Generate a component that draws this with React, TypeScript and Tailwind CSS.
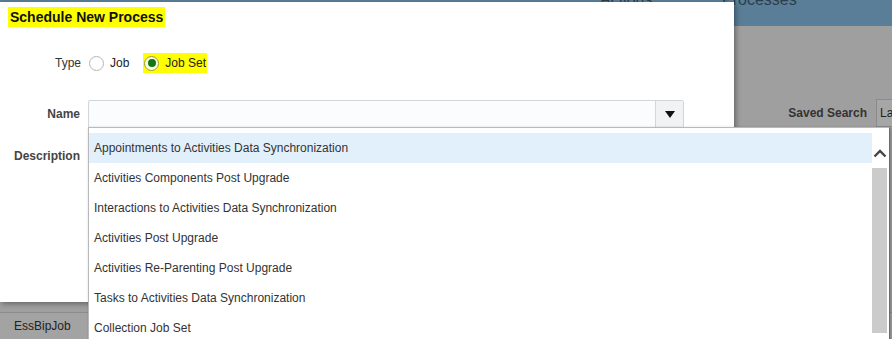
import React from 'react';

const items = [
  'Appointments to Activities Data Synchronization',
  'Activities Components Post Upgrade',
  'Interactions to Activities Data Synchronization',
  'Activities Post Upgrade',
  'Activities Re-Parenting Post Upgrade',
  'Tasks to Activities Data Synchronization',
  'Collection Job Set',
];

const App: React.FC = () => {
  return (
    <div className="relative w-[892px] h-[339px] overflow-hidden bg-[#9f9f9f] font-['Liberation_Sans',Arial,sans-serif]">
      {/* Page behind the modal */}
      <div className="flex flex-col h-full">
        <div className="h-[26px] bg-[#5a7e98] relative overflow-hidden">
          <span className="absolute left-[600px] -top-[12px] text-[16px] text-[#2c3e4c]">Actions</span>
          <span className="absolute left-[722px] -top-[12px] text-[16px] text-[#2c3e4c]">Processes</span>
        </div>
        <div className="flex justify-end items-center pt-[73px] gap-[9px]">
          <span className="text-[12px] font-bold text-[#333]">Saved Search</span>
          <div className="w-[16px] h-[28px] border border-[#8a8a8a] border-r-0 bg-[#a6a6a6] pl-[3px] text-[12px] leading-[26px] text-[#222] overflow-hidden">La</div>
        </div>
        <div className="mt-auto h-[27px] bg-[#a3a3a3] border-t border-[#8d8d8d] flex items-center">
          <span className="pl-[14px] text-[12px] text-[#222]">EssBipJob</span>
        </div>
      </div>

      {/* Dialog */}
      <div className="absolute left-0 top-[2px] w-[734px] h-[300px] bg-white shadow-[2px_2px_5px_rgba(0,0,0,0.35)]">
        <div className="pt-[3px] pl-[8px]">
          <span className="bg-[#ffff00] px-[2px] py-[2px] text-[14px] font-bold text-[#111]">Schedule New Process</span>
        </div>
        <div className="flex items-center mt-[24px] h-[20px]">
          <span className="w-[81px] text-right text-[12px] text-[#333]">Type</span>
          <span className="ml-[8px] w-[15px] h-[15px] rounded-full border border-[#b5b5b5] bg-white" />
          <span className="ml-[6px] text-[12px] text-[#222]">Job</span>
          <span className="ml-[14px] flex items-center h-[20px] bg-[#ffff00] pl-[1px] pr-[1px]">
            <span className="w-[15px] h-[15px] rounded-full border border-[#9a9a40] bg-[#fbfbe0] flex items-center justify-center">
              <span className="w-[8px] h-[8px] rounded-full bg-[#117711]" />
            </span>
            <span className="ml-[6px] text-[12px] text-[#222]">Job Set</span>
          </span>
        </div>
        <div className="flex items-center mt-[27px]">
          <span className="w-[80px] text-right text-[12px] font-bold text-[#444]">Name</span>
          <div className="ml-[8px] w-[596px] h-[28px] border border-[#d2d6da] bg-[#fafcfd] rounded-[2px] flex justify-end">
            <div className="w-[28px] h-full border-l border-[#d6d6d6] bg-[#f1f2f3] flex items-center justify-center">
              <svg width="10" height="7" viewBox="0 0 10 7">
                <polygon points="0,0 10,0 5,7" fill="#111" />
              </svg>
            </div>
          </div>
        </div>
        <div className="flex mt-[19px]">
          <span className="w-[80px] text-right text-[12px] font-bold text-[#444]">Description</span>
        </div>
      </div>

      {/* Dropdown list */}
      <div className="absolute left-[88px] top-[127px] w-[802px] h-[220px] bg-white border border-[#b9b9b9] border-r-[#6c6c6c] shadow-[1px_1px_3px_rgba(0,0,0,0.25)] flex items-start pt-[5px]">
        <div className="flex-1 flex flex-col">
          {items.map((item, i) => (
            <div
              key={item}
              className={`h-[30px] pl-[5px] flex items-center text-[12px] text-[#333] ${i === 0 ? 'bg-[#e2f0fc]' : ''}`}
            >
              {item}
            </div>
          ))}
        </div>
        <div className="w-[16px] mr-[1px] flex flex-col">
          <div className="h-[35px] flex items-center justify-center pt-[6px]">
            <svg width="14" height="9" viewBox="0 0 14 9">
              <polyline points="1.5,7.5 7,2 12.5,7.5" fill="none" stroke="#444" strokeWidth="2.4" />
            </svg>
          </div>
          <div className="w-[15px] h-[165px] bg-[#cbcbcb]" />
        </div>
      </div>
    </div>
  );
};

export default App;
